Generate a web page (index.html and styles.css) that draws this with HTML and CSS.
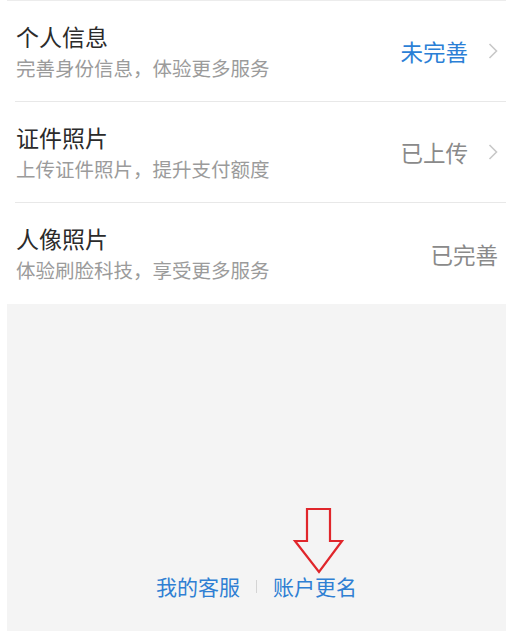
FILE: index.html
```html
<!DOCTYPE html>
<html lang="zh-CN">
<head>
<meta charset="utf-8">
<title>账户信息</title>
<link rel="stylesheet" href="styles.css">
</head>
<body>
<div class="page">
  <ul class="list">
    <li class="item">
      <div class="texts">
        <div class="title">个人信息</div>
        <div class="sub">完善身份信息，体验更多服务</div>
      </div>
      <div class="status blue">未完善</div>
      <svg class="chev" viewBox="0 0 10 16" width="10" height="16"><path d="M1.5 1 L8.5 8 L1.5 15" fill="none" stroke="#c8c8c8" stroke-width="1.6"/></svg>
    </li>
    <li class="item">
      <div class="texts">
        <div class="title">证件照片</div>
        <div class="sub">上传证件照片，提升支付额度</div>
      </div>
      <div class="status">已上传</div>
      <svg class="chev" viewBox="0 0 10 16" width="10" height="16"><path d="M1.5 1 L8.5 8 L1.5 15" fill="none" stroke="#c8c8c8" stroke-width="1.6"/></svg>
    </li>
    <li class="item last">
      <div class="texts">
        <div class="title">人像照片</div>
        <div class="sub">体验刷脸科技，享受更多服务</div>
      </div>
      <div class="status">已完善</div>
    </li>
  </ul>
  <div class="footer">
    <div class="links">
      <a class="link">我的客服</a>
      <span class="sep"></span>
      <a class="link">账户更名</a>
    </div>
    <svg class="arrow" viewBox="0 0 54 70" width="54" height="70"><path d="M15 2 H38 V34 H50 L27 65 L3 34 H15 Z" fill="none" stroke="#e0262b" stroke-width="2.2" stroke-linejoin="miter"/></svg>
  </div>
</div>
</body>
</html>
```
FILE: styles.css
```css
* { box-sizing: border-box; }
html, body { margin: 0; padding: 0; background: #fff; }
body {
  font-family: "Noto Sans CJK SC", "Noto Sans", sans-serif;
  width: 506px;
  height: 631px;
  overflow: hidden;
}
.page {
  margin-left: 7px;
  height: 631px;
  display: flex;
  flex-direction: column;
}
.list {
  list-style: none;
  margin: 0;
  padding: 0;
  border-top: 1px solid #ececec;
}
.item {
  margin-left: 8px;
  height: 101px;
  border-bottom: 1px solid #e8e8e8;
  display: flex;
  align-items: center;
  padding-right: 8px;
}
.item.last { border-bottom: none; }
.texts { flex: 1; padding-left: 1px; padding-top: 1px; }
.title {
  font-size: 23px;
  line-height: 31px;
  color: #2b2b2b;
}
.sub {
  font-size: 19.5px;
  line-height: 31px;
  color: #9b9b9b;
}
.status {
  font-size: 22.5px;
  color: #8a8a8a;
  line-height: 28px;
}
.status.blue { color: #2b7fd6; }
.chev { margin-left: 20px; display: block; }
.footer {
  flex: 1;
  background: #f4f4f4;
  position: relative;
  display: flex;
  flex-direction: column;
  justify-content: flex-end;
  padding-bottom: 30px;
}
.links {
  display: flex;
  justify-content: center;
  align-items: center;
  gap: 16px;
}
.link {
  font-size: 21px;
  line-height: 30px;
  color: #2f7fd3;
}
.sep {
  width: 1px;
  height: 13px;
  background: #d4d4d4;
}
.arrow {
  position: absolute;
  left: 285px;
  top: 203px;
}
```
